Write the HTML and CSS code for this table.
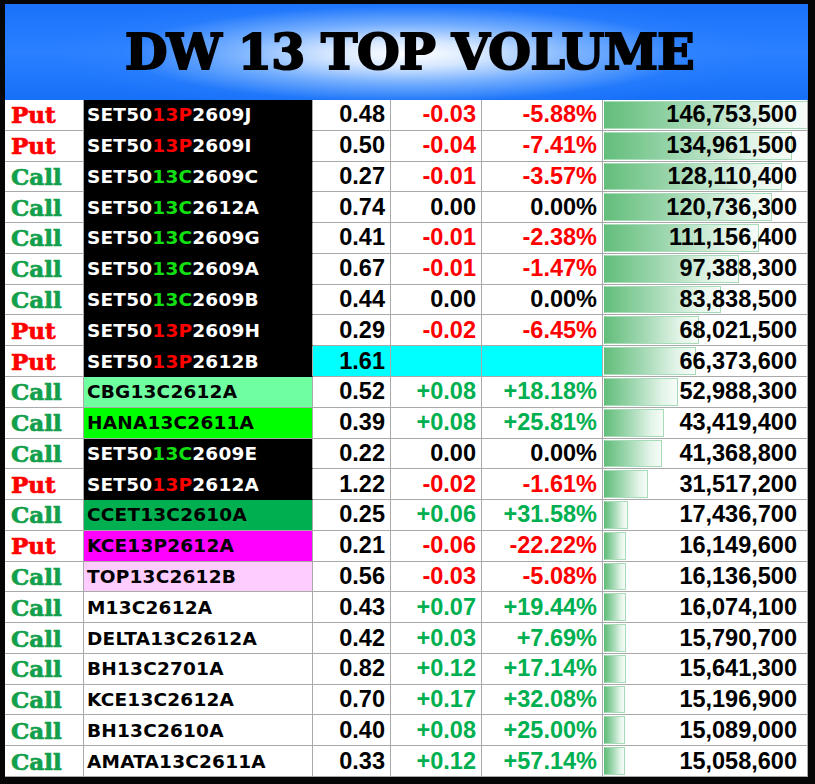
FILE: index.html
```html
<!DOCTYPE html>
<html>
<head>
<meta charset="utf-8">
<title>DW 13 TOP VOLUME</title>
<link rel="stylesheet" href="styles.css">
</head>
<body>
<div class="frame">
  <header class="title"><h1>DW 13 TOP VOLUME</h1></header>
  <div class="table">
    <div class="row"><div class="c type put">Put</div><div class="c name blk">SET50<span class="p">13P</span>2609J</div><div class="c num">0.48</div><div class="c num neg">-0.03</div><div class="c num neg">-5.88%</div><div class="c vol"><span class="bar" style="width:100%"></span><span class="v">146,753,500</span></div></div>
    <div class="row"><div class="c type put">Put</div><div class="c name blk">SET50<span class="p">13P</span>2609I</div><div class="c num">0.50</div><div class="c num neg">-0.04</div><div class="c num neg">-7.41%</div><div class="c vol"><span class="bar" style="width:91.97%"></span><span class="v">134,961,500</span></div></div>
    <div class="row"><div class="c type call">Call</div><div class="c name blk">SET50<span class="k">13C</span>2609C</div><div class="c num">0.27</div><div class="c num neg">-0.01</div><div class="c num neg">-3.57%</div><div class="c vol"><span class="bar" style="width:87.30%"></span><span class="v">128,110,400</span></div></div>
    <div class="row"><div class="c type call">Call</div><div class="c name blk">SET50<span class="k">13C</span>2612A</div><div class="c num">0.74</div><div class="c num">0.00</div><div class="c num">0.00%</div><div class="c vol"><span class="bar" style="width:82.27%"></span><span class="v">120,736,300</span></div></div>
    <div class="row"><div class="c type call">Call</div><div class="c name blk">SET50<span class="k">13C</span>2609G</div><div class="c num">0.41</div><div class="c num neg">-0.01</div><div class="c num neg">-2.38%</div><div class="c vol"><span class="bar" style="width:75.74%"></span><span class="v">111,156,400</span></div></div>
    <div class="row"><div class="c type call">Call</div><div class="c name blk">SET50<span class="k">13C</span>2609A</div><div class="c num">0.67</div><div class="c num neg">-0.01</div><div class="c num neg">-1.47%</div><div class="c vol"><span class="bar" style="width:66.36%"></span><span class="v">97,388,300</span></div></div>
    <div class="row"><div class="c type call">Call</div><div class="c name blk">SET50<span class="k">13C</span>2609B</div><div class="c num">0.44</div><div class="c num">0.00</div><div class="c num">0.00%</div><div class="c vol"><span class="bar" style="width:57.13%"></span><span class="v">83,838,500</span></div></div>
    <div class="row"><div class="c type put">Put</div><div class="c name blk">SET50<span class="p">13P</span>2609H</div><div class="c num">0.29</div><div class="c num neg">-0.02</div><div class="c num neg">-6.45%</div><div class="c vol"><span class="bar" style="width:46.35%"></span><span class="v">68,021,500</span></div></div>
    <div class="row"><div class="c type put">Put</div><div class="c name blk">SET50<span class="p">13P</span>2612B</div><div class="c num cyan">1.61</div><div class="c num cyan"></div><div class="c num cyan"></div><div class="c vol"><span class="bar" style="width:45.23%"></span><span class="v">66,373,600</span></div></div>
    <div class="row"><div class="c type call">Call</div><div class="c name mint">CBG13C2612A</div><div class="c num">0.52</div><div class="c num pos">+0.08</div><div class="c num pos">+18.18%</div><div class="c vol"><span class="bar" style="width:36.11%"></span><span class="v">52,988,300</span></div></div>
    <div class="row"><div class="c type call">Call</div><div class="c name lime">HANA13C2611A</div><div class="c num">0.39</div><div class="c num pos">+0.08</div><div class="c num pos">+25.81%</div><div class="c vol"><span class="bar" style="width:29.59%"></span><span class="v">43,419,400</span></div></div>
    <div class="row"><div class="c type call">Call</div><div class="c name blk">SET50<span class="k">13C</span>2609E</div><div class="c num">0.22</div><div class="c num">0.00</div><div class="c num">0.00%</div><div class="c vol"><span class="bar" style="width:28.19%"></span><span class="v">41,368,800</span></div></div>
    <div class="row"><div class="c type put">Put</div><div class="c name blk">SET50<span class="p">13P</span>2612A</div><div class="c num">1.22</div><div class="c num neg">-0.02</div><div class="c num neg">-1.61%</div><div class="c vol"><span class="bar" style="width:21.48%"></span><span class="v">31,517,200</span></div></div>
    <div class="row"><div class="c type call">Call</div><div class="c name dgreen">CCET13C2610A</div><div class="c num">0.25</div><div class="c num pos">+0.06</div><div class="c num pos">+31.58%</div><div class="c vol"><span class="bar" style="width:11.88%"></span><span class="v">17,436,700</span></div></div>
    <div class="row"><div class="c type put">Put</div><div class="c name magenta">KCE13P2612A</div><div class="c num">0.21</div><div class="c num neg">-0.06</div><div class="c num neg">-22.22%</div><div class="c vol"><span class="bar" style="width:11.00%"></span><span class="v">16,149,600</span></div></div>
    <div class="row"><div class="c type call">Call</div><div class="c name pink">TOP13C2612B</div><div class="c num">0.56</div><div class="c num neg">-0.03</div><div class="c num neg">-5.08%</div><div class="c vol"><span class="bar" style="width:11.00%"></span><span class="v">16,136,500</span></div></div>
    <div class="row"><div class="c type call">Call</div><div class="c name">M13C2612A</div><div class="c num">0.43</div><div class="c num pos">+0.07</div><div class="c num pos">+19.44%</div><div class="c vol"><span class="bar" style="width:10.95%"></span><span class="v">16,074,100</span></div></div>
    <div class="row"><div class="c type call">Call</div><div class="c name">DELTA13C2612A</div><div class="c num">0.42</div><div class="c num pos">+0.03</div><div class="c num pos">+7.69%</div><div class="c vol"><span class="bar" style="width:10.76%"></span><span class="v">15,790,700</span></div></div>
    <div class="row"><div class="c type call">Call</div><div class="c name">BH13C2701A</div><div class="c num">0.82</div><div class="c num pos">+0.12</div><div class="c num pos">+17.14%</div><div class="c vol"><span class="bar" style="width:10.66%"></span><span class="v">15,641,300</span></div></div>
    <div class="row"><div class="c type call">Call</div><div class="c name">KCE13C2612A</div><div class="c num">0.70</div><div class="c num pos">+0.17</div><div class="c num pos">+32.08%</div><div class="c vol"><span class="bar" style="width:10.36%"></span><span class="v">15,196,900</span></div></div>
    <div class="row"><div class="c type call">Call</div><div class="c name">BH13C2610A</div><div class="c num">0.40</div><div class="c num pos">+0.08</div><div class="c num pos">+25.00%</div><div class="c vol"><span class="bar" style="width:10.28%"></span><span class="v">15,089,000</span></div></div>
    <div class="row"><div class="c type call">Call</div><div class="c name">AMATA13C2611A</div><div class="c num">0.33</div><div class="c num pos">+0.12</div><div class="c num pos">+57.14%</div><div class="c vol"><span class="bar" style="width:10.26%"></span><span class="v">15,058,600</span></div></div>
  </div>
</div>
</body>
</html>
```

FILE: styles.css
```css
html, body {
  margin: 0;
  padding: 0;
  background: #000;
}
.frame {
  width: 815px;
  height: 784px;
  box-sizing: border-box;
  padding: 4px 7px 7px 5px;
  display: flex;
  flex-direction: column;
  background: #060606;
}
.title {
  height: 96px;
  flex: none;
  display: flex;
  align-items: center;
  justify-content: center;
  background:
    radial-gradient(ellipse 44% 62% at 50% 52%, rgba(255,255,255,1) 0%, rgba(222,236,255,0.95) 22%, rgba(150,196,255,0.7) 50%, rgba(60,140,255,0.2) 80%, rgba(30,120,255,0) 100%),
    linear-gradient(180deg, #1a72fb 0%, #2a80ff 50%, #1670f8 100%);
}
.title h1 {
  margin: 0;
  font-family: "DejaVu Serif", "Liberation Serif", serif;
  font-weight: 900;
  font-size: 49px;
  letter-spacing: -0.6px;
  color: #000;
  -webkit-text-stroke: 2px #000;
  line-height: 1;
  padding-left: 6px;
}
.table {
  flex: 1;
  display: grid;
  grid-template-rows: repeat(22, 1fr);
  background: #fff;
}
.row {
  display: grid;
  grid-template-columns: 79px 229px 78px 91px 121px 1fr;
  min-height: 0;
}
.c {
  border-right: 1px solid #a9a9a9;
  border-bottom: 1px solid #a9a9a9;
  display: flex;
  align-items: center;
  overflow: hidden;
  white-space: nowrap;
  min-height: 0;
}
.type {
  font-family: "DejaVu Serif", "Liberation Serif", serif;
  font-weight: bold;
  font-size: 23px;
  -webkit-text-stroke: 0.7px currentColor;
  padding-left: 6px;
}
.put { color: #ff0000; }
.call { color: #12a04c; }
.name {
  font-family: "DejaVu Sans", "Liberation Sans", sans-serif;
  font-weight: bold;
  font-size: 18.5px;
  letter-spacing: 0.2px;
  padding-left: 3px;
  color: #000;
}
.name.blk { background: #000; color: #fff; border-bottom-color: #000; }
.name .p { color: #ff0000; }
.name .k { color: #12e012; }
.name.mint { background: #70ffa0; }
.name.lime { background: #00ff00; }
.name.dgreen { background: #00b050; }
.name.magenta { background: #ff00ff; }
.name.pink { background: #ffccff; }
.num {
  justify-content: flex-end;
  padding-right: 5px;
  font-family: "Liberation Sans", Arial, sans-serif;
  font-weight: bold;
  font-size: 23.5px;
  color: #000;
}
.num.neg { color: #ff0000; }
.num.pos { color: #00b050; }
.num.cyan { background: #00ffff; }
.vol {
  position: relative;
  justify-content: flex-end;
  padding-right: 10px;
  font-family: "Liberation Sans", Arial, sans-serif;
  font-weight: bold;
  font-size: 23.5px;
  color: #000;
}
.bar {
  position: absolute;
  left: 1px;
  top: 1px;
  bottom: 1px;
  box-sizing: border-box;
  border: 1px solid #a8dcb8;
  border-left-color: #63be7b;
  background: linear-gradient(90deg, #63be7b 0%, #9fd7b0 40%, #e3f4e8 80%, #f6fcf8 100%);
}
.v {
  position: relative;
}
```
